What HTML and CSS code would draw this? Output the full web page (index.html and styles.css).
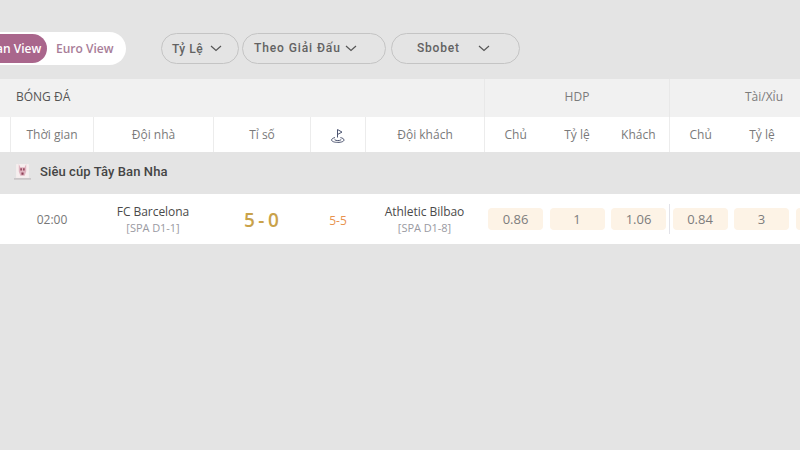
FILE: index.html
```html
<!DOCTYPE html>
<html>
    <head>
        <meta charset="UTF-8">
        <title>Kèo bóng đá</title>
        <link rel="stylesheet" href="styles.css">
    </head>
    <body>
        <div class="toolbar">
            <div class="viewSwitch">
                <span class="viewOn">Asian View</span>
                <span class="viewOff">Euro View</span>
            </div>
            <div class="filters">
                <div class="filter filterRate">
                    <span class="rateText">Tỷ Lệ</span>
                    <svg class="chev" viewBox="0 0 12 7"><path d="M1 1l5 4.4L11 1"/></svg>
                </div>
                <div class="filter filterLeague">
                    <span>Theo Giải Đấu</span>
                    <svg class="chev" viewBox="0 0 12 7"><path d="M1 1l5 4.4L11 1"/></svg>
                </div>
                <div class="filter filterBook">
                    <span>Sbobet</span>
                    <svg class="chev" viewBox="0 0 12 7"><path d="M1 1l5 4.4L11 1"/></svg>
                </div>
            </div>
        </div>

        <div class="board">
            <div class="row rowHead">
                <div class="sport">BÓNG ĐÁ</div>
                <div class="market">HDP</div>
                <div class="market marketNext">Tài/Xỉu</div>
            </div>
            <div class="row rowCols">
                <div class="cell"></div>
                <div class="cell">Thời gian</div>
                <div class="cell">Đội nhà</div>
                <div class="cell">Tỉ số</div>
                <div class="cell">
                    <svg class="flag" viewBox="0 0 16 16">
                        <path d="M7.500 9.500V1.500l4.500 2.600-4.500 2.400"/>
                        <path d="M5 9.600c-2 .4-3.400 1.200-3.400 2.400 0 1.500 2.800 2.400 6.200 2.400s6.200-.9 6.200-2.400c0-1.200-1.500-2-3.600-2.400"/>
                        <path d="M4.600 11.700c.8.6 2 .9 3.200.9s2.600-.3 3.400-.9"/>
                    </svg>
                </div>
                <div class="cell">Đội khách</div>
                <div class="cell odds">
                    <span>Chủ</span><span>Tỷ lệ</span><span>Khách</span>
                </div>
                <div class="cell odds">
                    <span>Chủ</span><span>Tỷ lệ</span><span></span>
                </div>
            </div>
            <div class="league">
                <svg class="cup" viewBox="0 0 16 16">
                    <rect x="0" y="14.500" width="16" height="1" fill="#b9b3b5"/>
                    <rect x="2" y="1" width="12" height="13" fill="#f6eeee"/>
                    <path d="M4.500 1l1.500 3h4l1.500-3v7L10 12H6L4.500 8z" fill="#dfb4c0"/>
                    <path d="M6 5h1.400v2H6zM8.600 5H10v2H8.600zM7 9h2v2H7z" fill="#8f3f55"/>
                </svg>
                <span>Siêu cúp Tây Ban Nha</span>
            </div>
            <div class="row rowMatch">
                <div></div>
                <div class="time">02:00</div>
                <div class="team">FC Barcelona<small>[SPA D1-1]</small></div>
                <div class="score">5 - 0</div>
                <div class="half">5-5</div>
                <div class="team">Athletic Bilbao<small>[SPA D1-8]</small></div>
                <div class="prices">
                    <span>0.86</span><span>1</span><span>1.06</span>
                </div>
                <div class="prices pricesNext">
                    <span>0.84</span><span>3</span><span></span>
                </div>
            </div>
        </div>
    </body>
</html>
```

FILE: styles.css
```css
html,body{
    margin: 0;
    padding: 0;
    height: 100%;
    overflow: hidden;
}
body{
    background: #e4e4e4;
    font-family: "Open Sans", "Liberation Sans", sans-serif;
    color: #6f6f6f;
}
.toolbar{
    display: flex;
    align-items: center;
    height: 33px;
    padding-top: 32px;
}
.viewSwitch{
    display: flex;
    align-items: center;
    flex: none;
    width: 155px;
    height: 33px;
    margin-left: -29px;
    box-sizing: border-box;
    padding-left: 2px;
    background: #fff;
    border-radius: 17px;
    font-size: 12px;
    font-weight: 600;
}
.viewOn{
    width: 74px;
    height: 29px;
    line-height: 29px;
    text-align: center;
    color: #fff;
    background: #a9668c;
    border-radius: 15px;
}
.viewOff{
    margin-left: 9px;
    color: #a87d98;
}
.filters{
    display: flex;
    gap: 3px;
    margin-left: 35px;
}
.filter{
    display: flex;
    align-items: center;
    box-sizing: border-box;
    height: 31px;
    border: 1px solid #c4c4c4;
    border-radius: 16px;
    font-family: Roboto, "Liberation Sans", sans-serif;
    font-size: 12px;
    font-weight: 500;
    letter-spacing: 0.5px;
    color: #626262;
}
.filterRate{
    width: 78px;
    padding-left: 10px;
}
.filterRate .chev{
    margin-left: 7px;
}
.filterLeague{
    width: 144px;
    padding-left: 11px;
}
.filterLeague span{
    margin-top: -2px;
    letter-spacing: 0.9px;
}
.filterLeague .chev{
    margin-left: 4px;
}
.filterBook{
    width: 129px;
    margin-left: 2px;
    padding-left: 25px;
}
.filterBook span{
    margin-top: -2px;
    letter-spacing: 0.8px;
}
.filterBook .chev{
    margin-left: 18px;
}
.chev{
    width: 12px;
    height: 7px;
    fill: none;
    stroke: #555;
    stroke-width: 1.2;
}
.board{
    width: 800px;
    margin-top: 14px;
    overflow: hidden;
}
.row{
    display: grid;
    grid-template-columns: 10px 83px 120px 97px 55px 119px 185px 185px;
    width: 854px;
}
.rowHead{
    grid-template-columns: 484px 185px 185px;
    height: 38px;
    background: #f1f1f1;
    font-size: 12px;
}
.sport{
    padding-left: 16px;
    line-height: 36px;
    color: #555;
}
.market{
    border-left: 1px solid #e8e8e8;
    text-align: center;
    line-height: 36px;
    color: #7b7b7b;
}
.marketNext{
    padding-left: 4px;
}
.rowCols{
    height: 35px;
    background: #fff;
    font-size: 12px;
    color: #7a7a7a;
}
.rowCols .cell{
    display: flex;
    align-items: center;
    justify-content: center;
    box-sizing: border-box;
    border-left: 1px solid #ececec;
}
.rowCols .cell:first-child{
    border-left: 0;
}
.rowCols .odds{
    display: grid;
    grid-template-columns: repeat(3, 1fr);
    text-align: center;
}
.flag{
    width: 16px;
    height: 16px;
    margin-top: 3px;
    fill: none;
    stroke: #4c5470;
    stroke-width: 1;
}
.league{
    display: flex;
    align-items: center;
    gap: 9px;
    height: 41px;
    padding-left: 14px;
    box-sizing: border-box;
    padding-bottom: 2px;
    font-family: Roboto, "Liberation Sans", sans-serif;
    font-size: 13px;
    font-weight: 500;
    letter-spacing: 0.1px;
    color: #444;
}
.cup{
    width: 17px;
    height: 17px;
}
.rowMatch{
    align-items: center;
    height: 50px;
    margin-top: 1px;
    background: #fff;
    text-align: center;
    font-size: 12px;
}
.time{
    color: #777;
    padding-left: 1px;
}
.team{
    color: #4a4a4a;
    line-height: 16px;
    letter-spacing: -0.05px;
    padding-top: 2px;
}
.team small{
    display: block;
    font-size: 11px;
    color: #9a9aa2;
}
.score{
    padding-top: 2px;
    font-size: 19px;
    font-weight: 600;
    color: #c9a24a;
    word-spacing: -2px;
    letter-spacing: 0.3px;
}
.half{
    padding: 2px 0 0 1px;
    color: #e8934f;
}
.prices{
    display: grid;
    grid-template-columns: repeat(3, 55px);
    gap: 6.5px;
    padding-left: 4px;
}
.pricesNext{
    position: relative;
    padding-left: 3.5px;
}
.pricesNext:before{
    position: absolute;
    left: 0;
    top: -4px;
    bottom: -4px;
    width: 1px;
    content: "";
    background: #e2e2e8;
}
.prices span{
    height: 22px;
    line-height: 22px;
    background: #fdf3e6;
    border-radius: 4px;
    font-size: 13px;
    color: #7d7d7d;
}
```
